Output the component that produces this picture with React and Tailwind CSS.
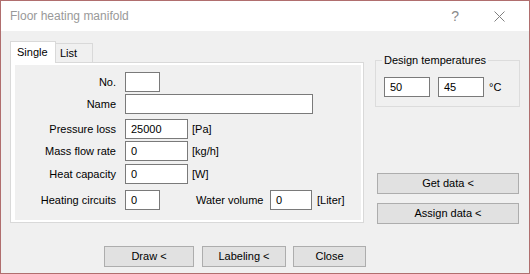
const box = "h-[20px] bg-white border border-[#7a7a7a] flex items-center px-[5px]";
const btn = "h-[21px] bg-[#e1e1e1] border border-[#adadad] flex items-center justify-center";

function Row({ label, className, children }) {
  return (
    <div className={"flex items-center h-[20px] " + className}>
      <span className="w-[101px] text-right">{label}</span>
      <div className="ml-[9px] flex items-center">{children}</div>
    </div>
  );
}

export default function App() {
  return (
    <div
      className="w-[530px] h-[274px] border border-[#b06e6e] flex flex-col text-[11px] text-black bg-[#f0f0f0]"
      style={{ fontFamily: '"Liberation Sans", Arial, sans-serif' }}
    >
      {/* title bar */}
      <div className="h-[30px] bg-white flex items-center pl-[9px]">
        <span className="text-[12px] text-[#999999]">Floor heating manifold</span>
        <span className="ml-auto text-[14px] text-[#8a8a8a]">?</span>
        <svg className="ml-[35px] mr-[24px]" width="11" height="11" viewBox="0 0 11 11">
          <path d="M0.5 0.5 L10.5 10.5 M10.5 0.5 L0.5 10.5" stroke="#808080" strokeWidth="1" fill="none" />
        </svg>
      </div>

      <div className="flex-1 flex flex-col">
        <div className="flex pl-[9px] pt-[10px]">
          {/* tab control */}
          <div className="w-[354px] flex flex-col">
            <div className="flex items-end h-[21px]">
              <div className="h-[22px] w-[46px] -mb-px relative z-10 bg-white border-x border-t border-[#d9d9d9] flex items-center pl-[6px]">
                Single
              </div>
              <div className="h-[19px] w-[37px] border-t border-r border-[#d9d9d9] flex items-center pl-[4px]">
                List
              </div>
            </div>
            <div className="h-[161px] border border-[#d9d9d9] bg-white pl-[4px] pt-[2px] pr-[2px] pb-[2px] flex">
              <div className="flex-1 bg-[#f0f0f0] pt-[7px]">
                <Row label="No." className="">
                  <div className={box + " w-[35px]"}></div>
                </Row>
                <Row label="Name" className="mt-[2px]">
                  <div className={box + " w-[188px]"}></div>
                </Row>
                <Row label="Pressure loss" className="mt-[5px]">
                  <div className={box + " w-[63px]"}>25000</div>
                  <span className="ml-[4px]">[Pa]</span>
                </Row>
                <Row label="Mass flow rate" className="mt-[2px]">
                  <div className={box + " w-[63px]"}>0</div>
                  <span className="ml-[4px]">[kg/h]</span>
                </Row>
                <Row label="Heat capacity" className="mt-[3px]">
                  <div className={box + " w-[63px]"}>0</div>
                  <span className="ml-[4px]">[W]</span>
                </Row>
                <Row label="Heating circuits" className="mt-[6px]">
                  <div className={box + " w-[35px]"}>0</div>
                  <span className="ml-[36px] w-[74px]">Water volume</span>
                  <div className={box + " w-[42px]"}>0</div>
                  <span className="ml-[5px]">[Liter]</span>
                </Row>
              </div>
            </div>
          </div>

          {/* right column */}
          <div className="ml-[11px] w-[145px] flex flex-col">
            <fieldset className="mt-[12px] border border-[#dcdcdc] pl-[8px] pt-[10px] pb-[9px]">
              <legend className="-ml-[2px] px-[2px] leading-[14px]">Design temperatures</legend>
              <div className="flex items-center">
                <div className={box + " w-[46px]"}>50</div>
                <div className={box + " w-[46px] ml-[8px]"}>45</div>
                <span className="ml-[5px]">°C</span>
              </div>
            </fieldset>
            <div className={btn + " mt-[66px] ml-[2px] w-[142px]"}>Get data &lt;</div>
            <div className={btn + " mt-[9px] ml-[2px] w-[142px]"}>Assign data &lt;</div>
          </div>
        </div>

        {/* bottom buttons */}
        <div className="flex mt-[22px] pl-[103px]">
          <div className={btn + " w-[90px]"}>Draw &lt;</div>
          <div className={btn + " w-[84px] ml-[8px]"}>Labeling &lt;</div>
          <div className={btn + " w-[73px] ml-[7px]"}>Close</div>
        </div>
      </div>
    </div>
  );
}
